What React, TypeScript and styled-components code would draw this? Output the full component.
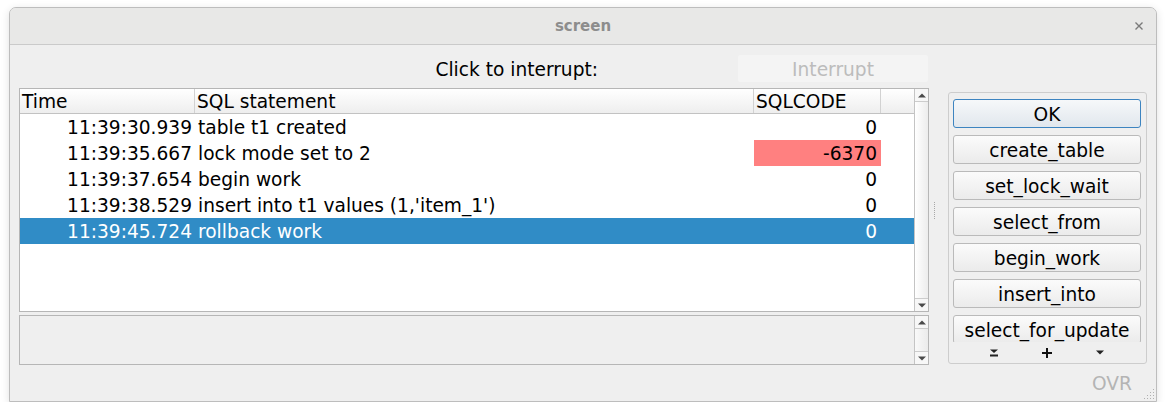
import styled, { createGlobalStyle } from "styled-components";

const GlobalStyle = createGlobalStyle`
  body {
    margin: 0;
    background: #ffffff;
    font-family: "DejaVu Sans", "Noto Sans", sans-serif;
    font-size: 18.6px;
    color: #000000;
  }
`;

const Page = styled.div`
  padding: 7px 0 0 9px;
`;

const Window = styled.div`
  width: 1148px;
  height: 395px;
  box-sizing: border-box;
  border: 1px solid #bdbdbd;
  border-radius: 7px 7px 0 0;
  background: #efefef;
  display: flex;
  flex-direction: column;
  box-shadow: 0 2px 8px rgba(0, 0, 0, 0.12);
  overflow: hidden;
`;

const TitleBar = styled.div`
  height: 37px;
  box-sizing: border-box;
  flex-shrink: 0;
  background: #e8e8e7;
  border-bottom: 1px solid #cacaca;
  display: grid;
  grid-template-columns: 1fr auto 1fr;
  align-items: center;
`;

const Title = styled.div`
  grid-column: 2;
  font-size: 15px;
  font-weight: bold;
  color: #8d8d8d;
`;

const CloseButton = styled.div`
  justify-self: end;
  margin-right: 12px;
  display: flex;
  align-items: center;
`;

const Main = styled.div`
  height: 320px;
  flex-shrink: 0;
  display: flex;
  padding: 0 9px;
`;

const LeftColumn = styled.div`
  width: 910px;
  padding-top: 10px;
  display: flex;
  flex-direction: column;
`;

const TopRow = styled.div`
  height: 27px;
  display: flex;
  align-items: center;
`;

const Label = styled.div`
  flex: 1;
  text-align: right;
  padding-right: 140px;
  padding-top: 1px;
`;

const DisabledButton = styled.div`
  width: 190px;
  height: 27px;
  margin-right: 1px;
  background: #f4f4f4;
  color: #bcbcbc;
  display: flex;
  align-items: center;
  justify-content: center;
  padding-top: 1px;
  box-sizing: border-box;
  border-radius: 2px;
`;

const Table = styled.div`
  margin-top: 6px;
  height: 224px;
  box-sizing: border-box;
  border: 1px solid #b6b6b6;
  background: #ffffff;
  display: flex;
`;

const Grid = styled.div`
  flex: 1;
  display: flex;
  flex-direction: column;
`;

const columns = "175px 559px 127px 1fr";

const HeaderRow = styled.div`
  height: 25px;
  box-sizing: border-box;
  display: grid;
  grid-template-columns: ${columns};
  border-bottom: 1px solid #c2c2c2;
  background: linear-gradient(#ffffff, #eeeeee);
`;

const HeaderCell = styled.div<{ $last?: boolean }>`
  padding: 1px 0 0 2px;
  line-height: 23px;
  border-right: ${({ $last }) => ($last ? "none" : "1px solid #d2d2d2")};
  white-space: nowrap;
  overflow: hidden;
`;

const Row = styled.div<{ $selected?: boolean }>`
  height: 26px;
  box-sizing: border-box;
  padding-top: 1px;
  display: grid;
  grid-template-columns: ${columns};
  line-height: 25px;
  background: ${({ $selected }) => ($selected ? "#308cc6" : "transparent")};
  color: ${({ $selected }) => ($selected ? "#ffffff" : "#000000")};
  white-space: nowrap;
`;

const TimeCell = styled.div`
  text-align: right;
  padding-right: 3px;
`;

const SqlCell = styled.div`
  padding-left: 3px;
  overflow: hidden;
`;

const CodeCell = styled.div<{ $error?: boolean }>`
  text-align: right;
  padding-right: 4px;
  margin-top: -1px;
  padding-top: 1px;
  background: ${({ $error }) => ($error ? "#ff8080" : "transparent")};
`;

const ScrollBar = styled.div<{ $track?: string }>`
  width: 14px;
  box-sizing: border-box;
  border-left: 1px solid #c4c4c4;
  display: flex;
  flex-direction: column;
  background: ${({ $track }) => $track || "linear-gradient(90deg, #ffffff, #ececec)"};
`;

const ScrollArrow = styled.div<{ $down?: boolean }>`
  height: 13px;
  flex-shrink: 0;
  box-sizing: border-box;
  display: flex;
  align-items: center;
  justify-content: center;
  background: #f7f7f7;
  border-top: ${({ $down }) => ($down ? "1px solid #cccccc" : "none")};
  border-bottom: ${({ $down }) => ($down ? "none" : "1px solid #cccccc")};
`;

const ScrollTrack = styled.div`
  flex: 1;
`;

const LogArea = styled.div`
  margin-top: 3px;
  height: 50px;
  box-sizing: border-box;
  border: 1px solid #b6b6b6;
  background: #efefef;
  display: flex;
`;

const LogText = styled.div`
  flex: 1;
`;

const Splitter = styled.div`
  width: 19px;
  padding-left: 5px;
  padding-top: 10px;
  box-sizing: border-box;
  display: flex;
  align-items: center;
`;

const SplitterDots = styled.div`
  width: 1px;
  height: 17px;
  background: repeating-linear-gradient(#a8a8a8 0 1px, transparent 1px 2px);
`;

const RightColumn = styled.div`
  width: 199px;
  padding-top: 47px;
  display: flex;
  flex-direction: column;
`;

const GroupBox = styled.div`
  height: 272px;
  box-sizing: border-box;
  border: 1px solid #cdcdcd;
  border-radius: 3px;
  padding: 6px 5px 0 4px;
  display: flex;
  flex-direction: column;
`;

const ButtonList = styled.div`
  height: 243px;
  flex-shrink: 0;
  overflow: hidden;
  display: flex;
  flex-direction: column;
  gap: 7px;
`;

const ActionButton = styled.div<{ $default?: boolean }>`
  height: 29px;
  flex-shrink: 0;
  box-sizing: border-box;
  padding-top: 2px;
  border: 1px solid ${({ $default }) => ($default ? "#3d84c0" : "#bababa")};
  border-radius: 3px;
  background: ${({ $default }) =>
    $default
      ? "linear-gradient(#f6f8fa, #e1e7ed)"
      : "linear-gradient(#fbfbfb, #ebebeb)"};
  display: flex;
  align-items: center;
  justify-content: center;
  white-space: nowrap;
`;

const ArrowRow = styled.div`
  flex: 1;
  display: flex;
  align-items: center;
  justify-content: center;
  gap: 43px;
  padding-right: 1px;
`;

const StatusBar = styled.div`
  flex: 1;
  display: flex;
  align-items: center;
  justify-content: flex-end;
  gap: 11px;
`;

const StatusText = styled.div`
  color: #b4b4b4;
  padding-top: 1px;
`;

const SizeGrip = styled.div`
  align-self: flex-end;
  display: flex;
  margin-bottom: 1px;
  margin-right: 1px;
`;

type Entry = {
  time: string;
  sql: string;
  code: string;
  error?: boolean;
  selected?: boolean;
};

const entries: Entry[] = [
  { time: "11:39:30.939", sql: "table t1 created", code: "0" },
  { time: "11:39:35.667", sql: "lock mode set to 2", code: "-6370", error: true },
  { time: "11:39:37.654", sql: "begin work", code: "0" },
  { time: "11:39:38.529", sql: "insert into t1 values (1,'item_1')", code: "0" },
  { time: "11:39:45.724", sql: "rollback work", code: "0", selected: true },
];

const actions = [
  "OK",
  "create_table",
  "set_lock_wait",
  "select_from",
  "begin_work",
  "insert_into",
  "select_for_update",
];

const Triangle = ({ up }: { up?: boolean }) => (
  <svg width="8" height="5" viewBox="0 0 8 5">
    <polygon points={up ? "0,4.5 8,4.5 4,0.5" : "0,0.5 8,0.5 4,4.5"} fill="#4a4a4a" />
  </svg>
);

const Scroller = ({ track }: { track?: string }) => (
  <ScrollBar $track={track}>
    <ScrollArrow>
      <Triangle up />
    </ScrollArrow>
    <ScrollTrack />
    <ScrollArrow $down>
      <Triangle />
    </ScrollArrow>
  </ScrollBar>
);

const App = () => {
  return (
    <Page>
      <GlobalStyle />
      <Window>
        <TitleBar>
          <Title>screen</Title>
          <CloseButton>
            <svg width="10" height="10" viewBox="0 0 10 10">
              <path d="M1.5 1.5 L8.5 8.5 M8.5 1.5 L1.5 8.5" stroke="#7a7a7a" strokeWidth="1.4" />
            </svg>
          </CloseButton>
        </TitleBar>
        <Main>
          <LeftColumn>
            <TopRow>
              <Label>Click to interrupt:</Label>
              <DisabledButton>Interrupt</DisabledButton>
            </TopRow>
            <Table>
              <Grid>
                <HeaderRow>
                  <HeaderCell>Time</HeaderCell>
                  <HeaderCell>SQL statement</HeaderCell>
                  <HeaderCell>SQLCODE</HeaderCell>
                  <HeaderCell $last />
                </HeaderRow>
                {entries.map((entry, index) => (
                  <Row key={`row_${index}`} $selected={entry.selected}>
                    <TimeCell>{entry.time}</TimeCell>
                    <SqlCell>{entry.sql}</SqlCell>
                    <CodeCell $error={entry.error}>{entry.code}</CodeCell>
                    <div />
                  </Row>
                ))}
              </Grid>
              <Scroller />
            </Table>
            <LogArea>
              <LogText />
              <Scroller track="linear-gradient(90deg, #f9f9f9, #ebebeb)" />
            </LogArea>
          </LeftColumn>
          <Splitter>
            <SplitterDots />
          </Splitter>
          <RightColumn>
            <GroupBox>
              <ButtonList>
                {actions.map((action, index) => (
                  <ActionButton key={action} $default={index === 0}>
                    {action}
                  </ActionButton>
                ))}
              </ButtonList>
              <ArrowRow>
                <svg width="8" height="8" viewBox="0 0 8 8">
                  <polygon points="0,0.5 8,0.5 4,4" fill="#222" />
                  <rect x="0" y="5.5" width="8" height="2" fill="#222" />
                </svg>
                <svg width="12" height="12" viewBox="0 0 12 12">
                  <path d="M6 1 V11 M1 6 H11" stroke="#111" strokeWidth="2" />
                </svg>
                <svg width="8" height="5" viewBox="0 0 8 5">
                  <polygon points="0,0.5 8,0.5 4,4.5" fill="#222" />
                </svg>
              </ArrowRow>
            </GroupBox>
          </RightColumn>
        </Main>
        <StatusBar>
          <StatusText>OVR</StatusText>
          <SizeGrip>
            <svg width="12" height="12" viewBox="0 0 12 12">
              {[
                [10, 2], [10, 5], [7, 5], [10, 8], [7, 8], [4, 8], [10, 11], [7, 11], [4, 11], [1, 11],
              ].map(([x, y], i) => (
                <rect key={i} x={x} y={y - 1} width="1" height="1" fill="#b0b0b0" />
              ))}
            </svg>
          </SizeGrip>
        </StatusBar>
      </Window>
    </Page>
  );
};

export default App;
